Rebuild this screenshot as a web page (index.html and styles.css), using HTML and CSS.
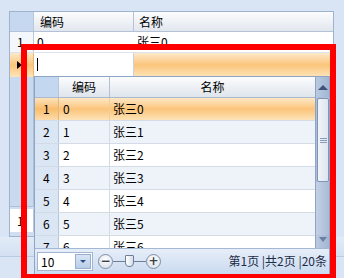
FILE: index.html
```html
<!DOCTYPE html>
<html lang="zh">
<head>
  <meta charset="UTF-8">
  <title>ComboGrid</title>
  <link rel="stylesheet" href="styles.css">
</head>
<body>
  <div class="page">
    <div class="grid">
      <div class="grid-head">
        <div class="rn rn-head"></div>
        <div class="hc c1">编码</div>
        <div class="hc c2">名称</div>
      </div>
      <div class="grid-row">
        <div class="rn">1</div>
        <div class="cell c1">0</div>
        <div class="cell c2">张三0</div>
      </div>
      <div class="grid-row editing">
        <div class="rn current"><span class="arrow"></span></div>
        <div class="cell c1 editor"><span class="caret"></span></div>
        <div class="cell c2"></div>
      </div>
      <div class="grid-fill">
        <div class="rn-col"></div>
        <div class="fill"></div>
      </div>
      <div class="grid-pager">
        <div class="page-box">1</div>
      </div>
    </div>
    <div class="under-bar"></div>

    <!-- dropdown of the combo editor -->
    <div class="combo-popup">
      <div class="pop-main">
        <div class="pop-table">
          <div class="pop-head">
            <div class="prn prn-head"></div>
            <div class="phc">编码</div>
            <div class="phc last">名称</div>
          </div>
          <div class="pop-rows" id="rows"></div>
        </div>
        <div class="scrollbar">
          <div class="sb-btn up"><span class="tri-up"></span></div>
          <div class="sb-thumb"><span class="grip"></span></div>
          <div class="sb-track"></div>
          <div class="sb-btn down"><span class="tri-down"></span></div>
        </div>
      </div>
      <div class="pop-pager">
        <div class="size-select">
          <span class="size-val">10</span>
          <span class="size-btn"><span class="tri-small"></span></span>
        </div>
        <div class="zoom">
          <span class="zbtn">−</span>
          <span class="zline"></span>
          <span class="zthumb"></span>
          <span class="zline"></span>
          <span class="zbtn">+</span>
        </div>
        <div class="pager-info">第1页 |共2页 |20条</div>
      </div>
    </div>

    <div class="highlight"></div>
  </div>

  <script>
    const rowsEl = document.getElementById('rows');
    for (let i = 0; i < 7; i++) {
      const row = document.createElement('div');
      row.className = 'prow' + (i === 0 ? ' selected' : (i % 2 ? ' alt' : ''));
      row.innerHTML = `<div class="prn">${i + 1}</div><div class="pc">${i}</div><div class="pc last">张三${i}</div>`;
      rowsEl.append(row);
    }
  </script>
</body>
</html>
```

FILE: styles.css
```css
* {
  margin: 0;
  padding: 0;
  box-sizing: border-box;
}

body {
  background: #d9e5f4;
  font-family: "Noto Sans CJK SC", "Liberation Sans", sans-serif;
  font-size: 12px;
  color: #000;
}

.page {
  position: relative;
  width: 344px;
  height: 278px;
  overflow: hidden;
  padding: 11px 0 0 9px;
}

/* outer grid */
.grid {
  width: 325px;
  height: 226px;
  border: 1px solid #9fb3cf;
  background: #fff;
  display: flex;
  flex-direction: column;
}

.grid-head,
.grid-row {
  display: grid;
  grid-template-columns: 24px 100px 1fr;
}

.grid-head {
  height: 20px;
  border-bottom: 1px solid #b3c2d6;
}

.rn {
  border-right: 1px solid #b8c8dd;
  background: #f4f7fb;
  padding-left: 7px;
  line-height: 20px;
}

.rn-head {
  background: #c5d8f0;
}

.hc {
  background: linear-gradient(#fbfcfd, #e2e7ee);
  border-right: 1px solid #b6c3d4;
  padding-left: 6px;
  line-height: 19px;
}

.hc.c2 {
  padding-left: 5px;
  border-right: none;
}

.grid-row {
  height: 21px;
  border-bottom: 1px solid #dde3ec;
}

.cell {
  padding-left: 3px;
  line-height: 20px;
}

.cell.c2 {
  padding-left: 3px;
}

.grid-row.editing {
  height: 24px;
  border-bottom: none;
}

.rn.current,
.editing .c2 {
  background: linear-gradient(#fde9c9, #fbc57b 50%, #fde4ba);
}

.rn.current {
  border-right-color: #e7b77a;
  position: relative;
}

.arrow {
  position: absolute;
  left: 7px;
  top: 8px;
  border-left: 5px solid #000;
  border-top: 4px solid transparent;
  border-bottom: 4px solid transparent;
}

.editor {
  background: #fff;
  border-right: 1px solid #c9d4e3;
  padding: 5px 0 0 3px;
}

.caret {
  display: block;
  width: 1px;
  height: 13px;
  background: #000;
}

.grid-fill {
  flex: 1;
  display: flex;
}

.rn-col {
  width: 24px;
  background: #c9daf0;
  border-right: 1px solid #aebfd8;
  border-bottom: 1px solid #aebfd8;
}

.fill {
  flex: 1;
}

.grid-pager {
  height: 29px;
  background: #cfdef1;
  padding: 2px 0 4px 0;
}

.page-box {
  width: 24px;
  height: 23px;
  background: #fff;
  border-right: 1px solid #b7c7dc;
  padding-left: 7px;
  line-height: 23px;
}

.under-bar {
  height: 20px;
  margin-left: -9px;
  background: linear-gradient(#e2ebf7, #d3e1f3);
  border-bottom: 1px solid #b9cbe3;
}

/* dropdown popup */
.combo-popup {
  position: absolute;
  left: 34px;
  top: 76px;
  width: 296px;
  height: 199px;
  border: 1px solid #8ea5c6;
  background: #fff;
  display: flex;
  flex-direction: column;
}

.pop-main {
  flex: 1;
  display: flex;
  overflow: hidden;
}

.pop-table {
  flex: 1;
  display: flex;
  flex-direction: column;
  overflow: hidden;
}

.pop-head,
.prow {
  display: grid;
  grid-template-columns: 24px 51px 1fr;
}

.pop-head {
  height: 21px;
  border-bottom: 1px solid #aab9cd;
}

.prn {
  background: #dbe6f4;
  border-right: 1px solid #b7c6da;
  padding-left: 8px;
  line-height: 22px;
}

.prn-head {
  background: #c3d7f0;
}

.phc {
  background: linear-gradient(#fbfcfd, #dfe5ed);
  border-right: 1px solid #b3c0d2;
  text-align: center;
  line-height: 20px;
}

.phc.last {
  border-right: none;
}

.pop-rows {
  flex: 1;
  overflow: hidden;
}

.prow {
  height: 23px;
  border-bottom: 1px solid #d3dbe6;
}

.prow.alt {
  background: #eef3fa;
}

.pc {
  border-right: 1px solid #d3dbe6;
  padding-left: 4px;
  line-height: 22px;
}

.pc.last {
  border-right: none;
  padding-left: 3px;
}

.prow.selected {
  background: linear-gradient(#fde8c6, #fbc47a 50%, #fde3b8);
}

.prow.selected .prn {
  background: linear-gradient(#fde3bc, #f9bd6c 50%, #fcdcac);
  border-right-color: #e5b57c;
}

.prow.selected .pc {
  border-right-color: #f0cf9f;
}

/* scrollbar */
.scrollbar {
  width: 14px;
  display: flex;
  flex-direction: column;
  background: #aebfd9;
  border-left: 1px solid #8fa3c2;
}

.sb-btn {
  display: flex;
  align-items: center;
  justify-content: center;
  background: linear-gradient(90deg, #b9c9e0, #a2b6d3);
}

.sb-btn.up {
  height: 20px;
}

.sb-btn.down {
  height: 13px;
  align-items: flex-start;
  padding-top: 2px;
}

.tri-up {
  border-bottom: 5px solid #3d5379;
  border-left: 5px solid transparent;
  border-right: 5px solid transparent;
}

.tri-down {
  border-top: 5px solid #6a7fa3;
  border-left: 4px solid transparent;
  border-right: 4px solid transparent;
}

.sb-thumb {
  height: 84px;
  margin: 1px 0 0 1px;
  background: linear-gradient(90deg, #f1f4f9, #dde5f0);
  border: 1px solid #7f95b7;
  border-radius: 2px;
  display: flex;
  align-items: center;
  justify-content: center;
}

.grip {
  width: 7px;
  height: 5px;
  border-top: 1px solid #8a9bb6;
  border-bottom: 1px solid #8a9bb6;
  position: relative;
}

.grip::after {
  content: "";
  position: absolute;
  left: 0;
  right: 0;
  top: 1px;
  border-top: 1px solid #8a9bb6;
}

.sb-track {
  flex: 1;
  background: linear-gradient(90deg, #c3d1e5, #a9bbd6);
}

/* pager of popup */
.pop-pager {
  height: 26px;
  border-top: 1px solid #a5b8d3;
  background: linear-gradient(#e6eef8, #cadaf0);
  display: flex;
  align-items: center;
  padding: 0 2px 1px 2px;
}

.size-select {
  width: 56px;
  height: 19px;
  background: #fff;
  border: 1px solid #a3b5cf;
  display: flex;
  align-items: stretch;
  justify-content: space-between;
}

.size-val {
  padding-left: 3px;
  line-height: 17px;
}

.size-btn {
  width: 16px;
  margin: 1px;
  background: linear-gradient(#d8e4f4, #b9cde9);
  border: 1px solid #97aed0;
  display: flex;
  align-items: center;
  justify-content: center;
}

.tri-small {
  border-top: 3px solid #2f4f86;
  border-left: 3px solid transparent;
  border-right: 3px solid transparent;
}

.zoom {
  display: flex;
  align-items: center;
  margin-left: 5px;
}

.zbtn {
  width: 15px;
  height: 15px;
  border: 1px solid #7f8ea8;
  border-radius: 50%;
  background: radial-gradient(circle at 50% 35%, #ffffff, #d3dbe6);
  color: #3a3f4a;
  font-family: "DejaVu Sans", sans-serif;
  font-size: 12px;
  font-weight: bold;
  line-height: 12px;
  text-align: center;
}

.zline {
  width: 12px;
  height: 1px;
  background: #6f7f99;
}

.zthumb {
  width: 9px;
  height: 12px;
  border: 1px solid #6f7f99;
  border-radius: 1px 1px 4px 4px;
  background: linear-gradient(90deg, #ffffff, #d6dde8);
}

.pager-info {
  margin-left: auto;
  color: #1d2c48;
  line-height: 16px;
}

/* red annotation frame */
.highlight {
  position: absolute;
  left: 21px;
  top: 44px;
  width: 315px;
  height: 236px;
  border: 6px solid #f00;
  pointer-events: none;
}
```
